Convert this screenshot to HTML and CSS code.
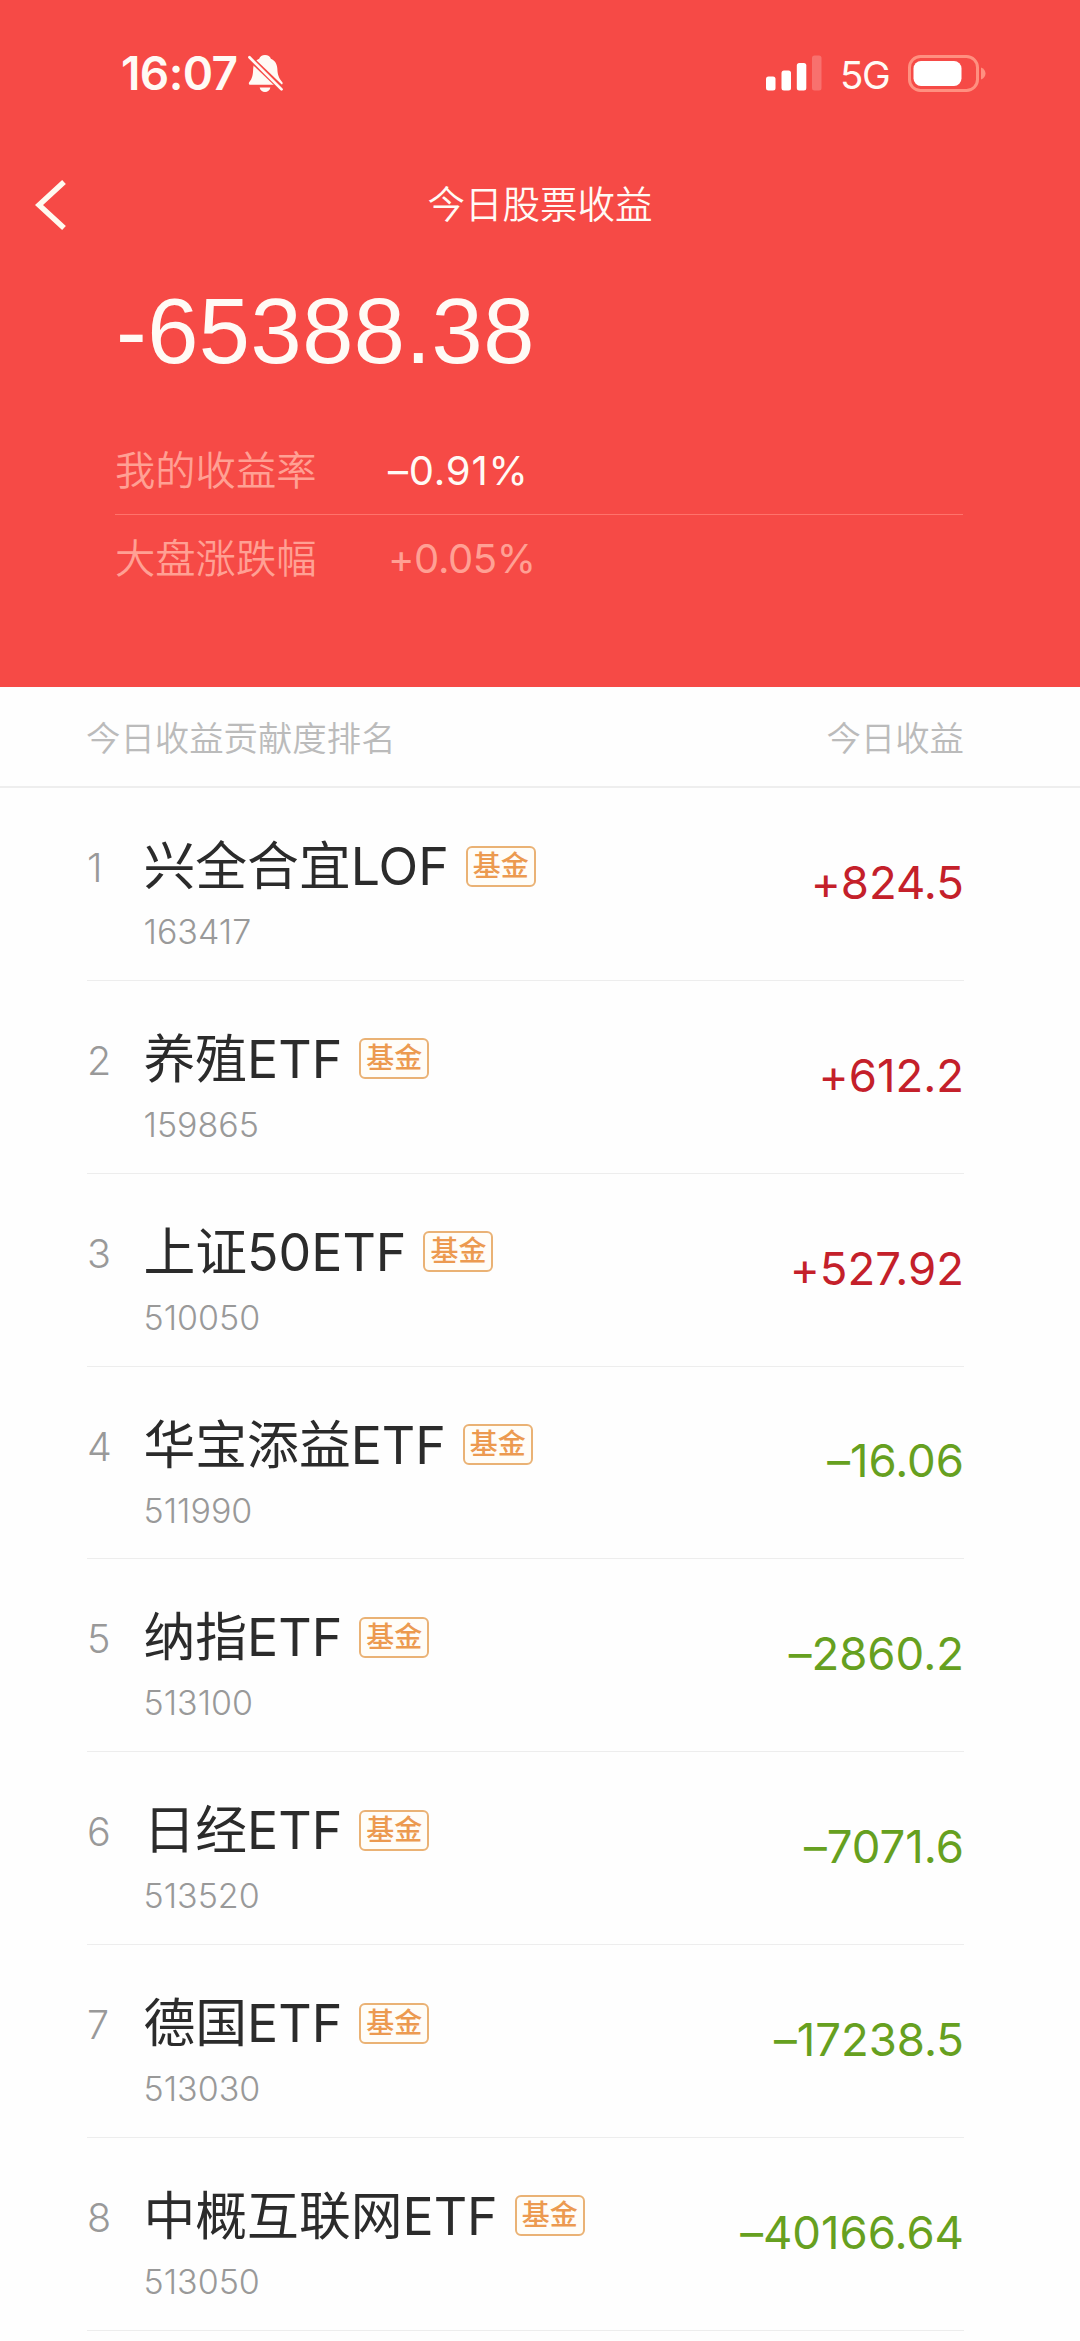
FILE: index.html
```
<!DOCTYPE html>
<html lang="zh-CN">
<head>
<meta charset="utf-8">
<title>今日股票收益</title>
<link rel="stylesheet" href="styles.css">
</head>
<body>
<header class="hero">
  <div class="status">
    <div class="status-left">
      <span class="clock">16:07</span>
      <svg class="bell" width="35" height="39" viewBox="0 0 36 42" preserveAspectRatio="none">
        <path fill="#fffaf5" d="M17.500 1c3 0 5.500 1.800 6 4.200 4.500 2 6.500 6 6.700 11 .2 6 1.300 9.500 5.300 14.500 .5 1.300-.2 2.500-1.500 2.500H2.500C1 33.200.400 32 1.200 30.500 4.500 26.500 5.200 22 5.300 16.200 5.500 11 7 7.200 11.500 5.200 12.200 2.800 14.500 1 17.500 1zM12 36h11c-.5 3-2.700 5-5.500 5s-5-2-5.500-5z"/>
        <path stroke="#f64a46" stroke-width="6" d="M-1 1.500l38 38"/>
        <path stroke="#fffaf5" stroke-width="2.800" stroke-linecap="round" d="M1.500 3.500l33 34.500"/>
      </svg>
    </div>
    <div class="status-right">
      <svg width="56" height="36" viewBox="0 0 56 36" fill="#fff">
        <rect y="21.500" width="9.500" height="14" rx="2.500"/>
        <rect x="15.500" y="15.500" width="9.500" height="20" rx="2.500"/>
        <rect x="30.800" y="8" width="9.500" height="27.500" rx="2.500"/>
        <rect x="46" y=".5" width="9.500" height="35" rx="2.500" opacity=".22"/>
      </svg>
      <span class="network">5G</span>
      <svg class="battery" width="78" height="37" viewBox="0 0 78 37">
        <rect x="1.500" y="1.500" width="68" height="34" rx="11" fill="none" stroke="#ff9080" stroke-width="3"/>
        <rect x="5.500" y="6" width="48" height="25" rx="7.500" fill="#fff"/>
        <path d="M73 12.500c6 2 6 10 0 12z" fill="#ff9080"/>
      </svg>
    </div>
  </div>
  <nav class="nav">
    <svg class="back" width="32" height="52" viewBox="0 0 32 52"><path d="M29 3L4 26l25 23" fill="none" stroke="#fffaf0" stroke-width="5.500"/></svg>
    <h1 class="title">今日股票收益</h1>
  </nav>
  <div class="total">-65388.38</div>
  <dl class="stats">
    <div class="stat"><dt>我的收益率</dt><dd>–0.91%</dd></div>
    <div class="stat stat-dim"><dt>大盘涨跌幅</dt><dd>+0.05%</dd></div>
  </dl>
</header>
<main>
  <div class="list-head"><span>今日收益贡献度排名</span><span>今日收益</span></div>
  <ol class="list">
    <li class="row"><span class="rank">1</span><div><div class="name">兴全合宜<span class="latin">LOF</span><span class="tag">基金</span></div><div class="code">163417</div></div><span class="amount up">+824.5</span></li>
    <li class="row"><span class="rank">2</span><div><div class="name">养殖<span class="latin">ETF</span><span class="tag">基金</span></div><div class="code">159865</div></div><span class="amount up">+612.2</span></li>
    <li class="row"><span class="rank">3</span><div><div class="name">上证<span class="latin">50ETF</span><span class="tag">基金</span></div><div class="code">510050</div></div><span class="amount up">+527.92</span></li>
    <li class="row"><span class="rank">4</span><div><div class="name">华宝添益<span class="latin">ETF</span><span class="tag">基金</span></div><div class="code">511990</div></div><span class="amount down">–16.06</span></li>
    <li class="row"><span class="rank">5</span><div><div class="name">纳指<span class="latin">ETF</span><span class="tag">基金</span></div><div class="code">513100</div></div><span class="amount down">–2860.2</span></li>
    <li class="row"><span class="rank">6</span><div><div class="name">日经<span class="latin">ETF</span><span class="tag">基金</span></div><div class="code">513520</div></div><span class="amount down">–7071.6</span></li>
    <li class="row"><span class="rank">7</span><div><div class="name">德国<span class="latin">ETF</span><span class="tag">基金</span></div><div class="code">513030</div></div><span class="amount down">–17238.5</span></li>
    <li class="row"><span class="rank">8</span><div><div class="name">中概互联网<span class="latin">ETF</span><span class="tag">基金</span></div><div class="code">513050</div></div><span class="amount down">–40166.64</span></li>
  </ol>
</main>
</body>
</html>
```
FILE: styles.css
```
* { box-sizing: border-box; margin: 0; padding: 0; }
body {
  width: 1080px;
  height: 2341px;
  overflow: hidden;
  background: #fefefe;
  font-family: Inter, "Noto Sans CJK SC", sans-serif;
  font-weight: 400;
}
svg { display: block; flex: none; }

.hero { height: 687px; background: #f64a46; color: #fffaf5; }
.status {
  display: flex;
  justify-content: space-between;
  align-items: center;
  height: 146px;
  padding: 0 94px 0 121px;
}
.status-left, .status-right { display: flex; align-items: center; }
.clock { font-size: 46px; font-weight: 600; line-height: 50px; letter-spacing: -0.6px; }
.bell { margin-left: 10px; }
.network { width: 49px; margin: 3px 19px 0 18px; font-size: 38.500px; font-weight: 400; line-height: 42px; letter-spacing: -1.500px; }

.nav { display: grid; grid-template-columns: 36px 1fr 36px; align-items: center; height: 118px; padding: 0 35px; }
.title { text-align: center; font-size: 37.500px; font-weight: 350; line-height: 44px; }

.total {
  height: 128px;
  padding: 14px 0 0 116px;
  font: 92px/106px "Liberation Sans", Arial, sans-serif;
  letter-spacing: 0.500px;
}

.stats { margin: 36px 117px 0 115px; }
.stat { display: grid; grid-template-columns: 273px 1fr; align-items: center; height: 86px; font-size: 40.300px; line-height: 48px; }
.stat dt { font-weight: 350; color: #ffa094; }
.stat dd { font-size: 40px; font-weight: 400; letter-spacing: 0.800px; font-feature-settings: "calt" 0; }
.stat-dim { height: 88px; border-top: 1px solid #ff736b; }
.stat-dim dd { color: #ffa094; letter-spacing: -0.400px; }

.list-head {
  display: flex;
  justify-content: space-between;
  align-items: center;
  height: 101px;
  padding: 0 116px 2px 86px;
  border-bottom: 2px solid #eee;
  font-size: 34.400px;
  font-weight: 350;
  color: #bbb;
}

.list { list-style: none; padding: 0 116px 0 87px; }
.row {
  display: grid;
  grid-template-columns: 56.500px 1fr auto;
  height: 192.850px;
  border-bottom: 1px solid #ededed;
}
.rank { margin-top: 55px; font-size: 39.500px; font-weight: 350; line-height: 50px; color: #999; }
.name { display: flex; align-items: center; height: 60px; margin-top: 48px; font-size: 51.800px; line-height: 60px; color: #2b2b2b; white-space: nowrap; }
.latin { font-weight: 400; letter-spacing: 0; }
.tag {
  width: 70px;
  height: 41px;
  margin-left: 17px;
  border: 2px solid #eab275;
  border-radius: 6px;
  background: #fffdf8;
  color: #ec9a50;
  font-size: 28px;
  font-weight: 500;
  line-height: 36px;
  text-align: center;
}
.code { margin-top: 15px; font-size: 34px; font-weight: 350; line-height: 42px; color: #999; }
.amount { align-self: center; padding-bottom: 2px; font-size: 45.500px; font-weight: 400; line-height: 54px; font-feature-settings: "calt" 0; }
.up { color: #c4202a; }
.down { color: #66a020; }
```
